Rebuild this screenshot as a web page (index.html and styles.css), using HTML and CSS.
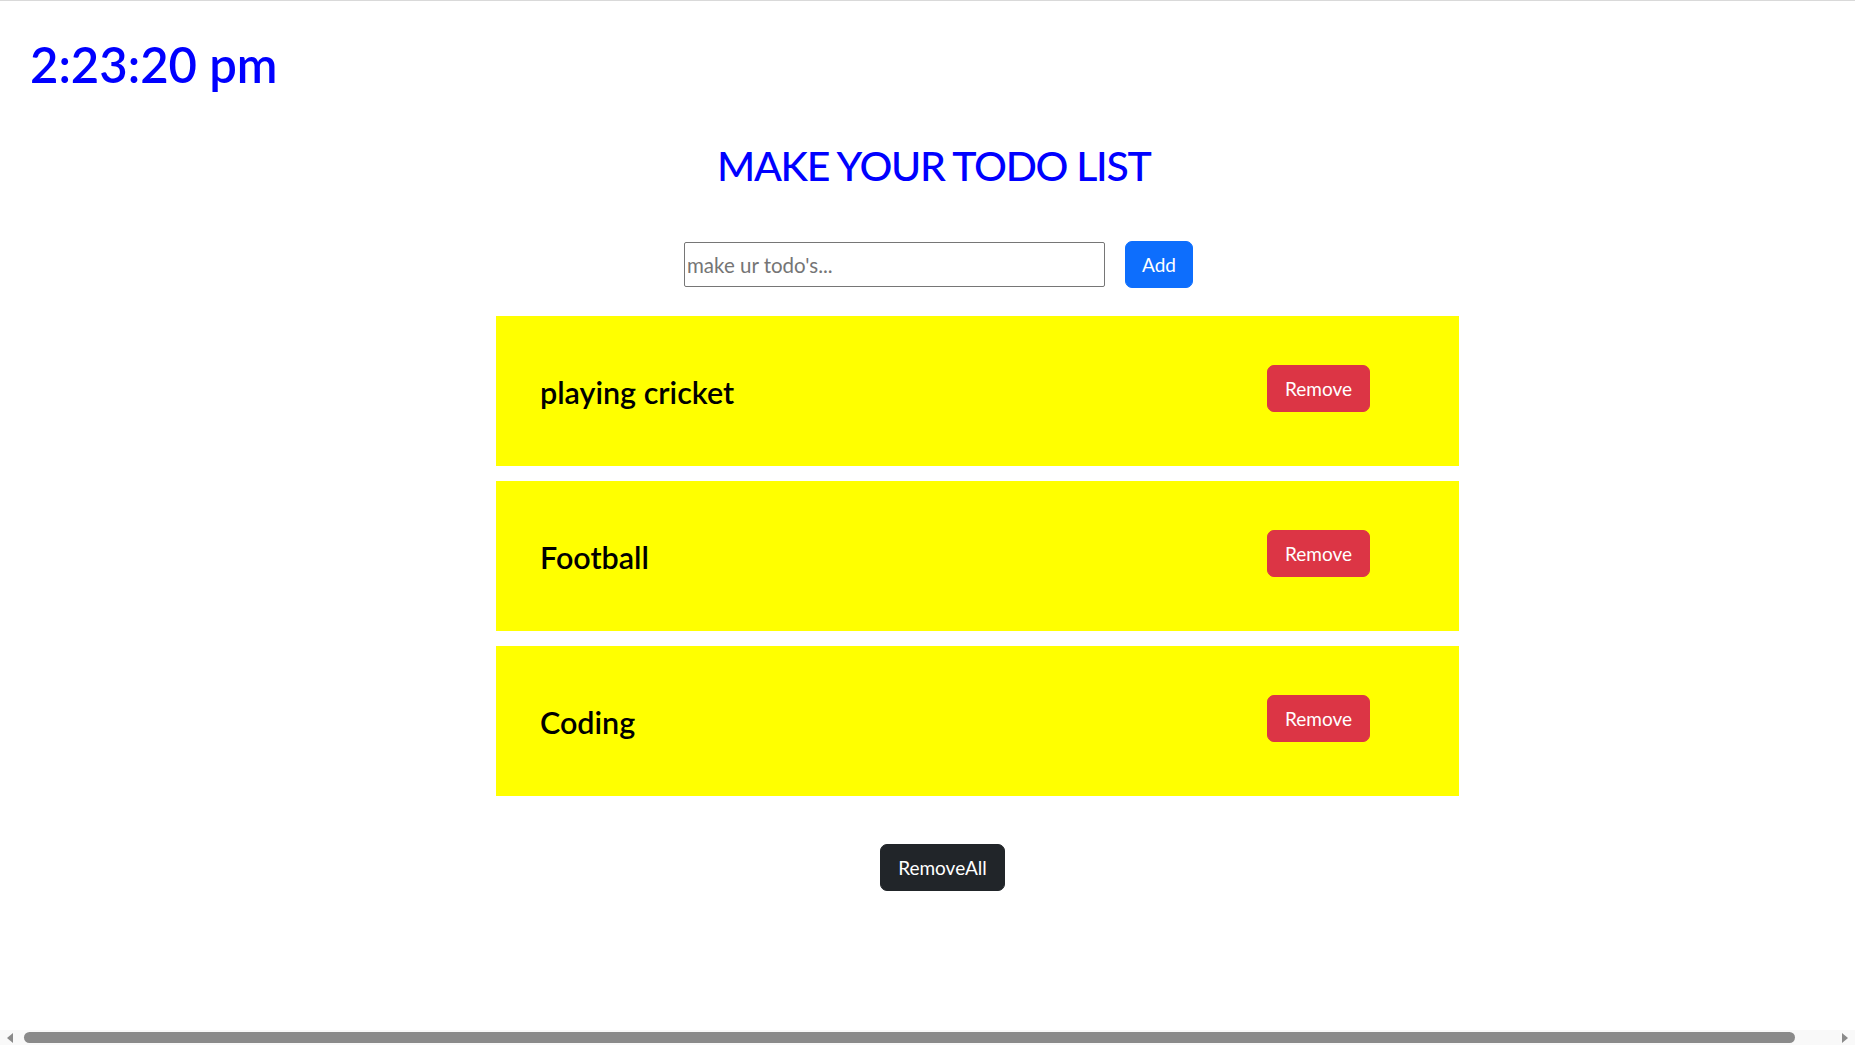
FILE: index.html
```html
<!DOCTYPE html>
<html lang="en">
<head>
<meta charset="utf-8">
<title>Todo List</title>
<link rel="stylesheet" href="styles.css">
</head>
<body>
<div class="page">
  <h1 class="clock">2:23:20 pm</h1>
  <h2 class="title">MAKE YOUR TODO LIST</h2>
  <div class="add-row">
    <input class="todo-input" type="text" placeholder="make ur todo's...">
    <button class="btn btn-add">Add</button>
  </div>
  <ul class="todo-list">
    <li class="todo-card">
      <h3 class="todo-text">playing cricket</h3>
      <button class="btn btn-remove">Remove</button>
    </li>
    <li class="todo-card">
      <h3 class="todo-text">Football</h3>
      <button class="btn btn-remove">Remove</button>
    </li>
    <li class="todo-card">
      <h3 class="todo-text">Coding</h3>
      <button class="btn btn-remove">Remove</button>
    </li>
  </ul>
  <div class="footer-row">
    <button class="btn btn-dark">RemoveAll</button>
  </div>
</div>
<div class="hscroll" aria-hidden="true">
  <span class="hscroll-arrow hscroll-left"></span>
  <span class="hscroll-thumb"></span>
  <span class="hscroll-arrow hscroll-right"></span>
</div>
</body>
</html>
```
FILE: styles.css
```css
html, body {
  margin: 0;
  padding: 0;
  background: #ffffff;
  overflow: hidden;
}

.page {
  min-height: 1000px;
  border-top: 1px solid #d9d9d9;
  font-family: Lato, "Open Sans", sans-serif;
  color: #000;
}

.clock {
  margin: 0;
  padding: 33px 0 0 30px;
  font-size: 49px;
  line-height: 60px;
  font-weight: 600;
  color: #0000ff;
}

.title {
  margin: 47px 0 0 0;
  padding-left: 717px;
  font-size: 41px;
  line-height: 50px;
  font-weight: 500;
  letter-spacing: -1.3px;
  color: #0000ff;
}

.add-row {
  display: flex;
  align-items: center;
  gap: 20px;
  margin-top: 50px;
  padding-left: 684px;
}

.todo-input {
  box-sizing: border-box;
  width: 421px;
  height: 45px;
  margin: 0;
  padding: 1px 2px;
  border: 1px solid #767676;
  border-radius: 2px;
  font-family: Lato, "Open Sans", sans-serif;
  font-size: 20.5px;
  color: #000;
}

.todo-input::placeholder {
  color: #757575;
}

.btn {
  box-sizing: border-box;
  height: 47px;
  margin: 0;
  padding: 0;
  border: 1px solid transparent;
  border-radius: 7px;
  font-family: Lato, "Open Sans", sans-serif;
  font-size: 19px;
  line-height: 29px;
  color: #ffffff;
  cursor: pointer;
}

.btn-add {
  background: #0d6efd;
  border-color: #0d6efd;
  width: 68px;
}

.btn-remove {
  background: #dc3545;
  border-color: #dc3545;
  width: 103px;
  margin-top: 49px;
}

.btn-dark {
  background: #212529;
  border-color: #212529;
  width: 125px;
}

.todo-list {
  list-style: none;
  margin: 28px 0 0 496px;
  padding: 0;
  width: 963px;
  display: flex;
  flex-direction: column;
  gap: 15px;
}

.todo-card {
  display: flex;
  justify-content: space-between;
  align-items: flex-start;
  height: 150px;
  box-sizing: border-box;
  padding: 0 89px 0 44px;
  background: #ffff00;
}

.todo-text {
  margin: 58px 0 0 0;
  font-size: 30.5px;
  line-height: 36px;
  font-weight: 600;
}

.footer-row {
  margin-top: 48px;
  padding-left: 880px;
}

/* window horizontal scrollbar overlay */
.hscroll {
  position: fixed;
  left: 0;
  right: 0;
  bottom: 0;
  height: 15px;
  display: flex;
  align-items: center;
  gap: 11px;
  padding: 0 7px;
  box-sizing: border-box;
  background: #f9f9f9;
}

.hscroll-arrow {
  width: 0;
  height: 0;
  border-top: 5px solid transparent;
  border-bottom: 5px solid transparent;
}

.hscroll-left {
  border-right: 6px solid #8a8a8a;
}

.hscroll-right {
  border-left: 6px solid #8a8a8a;
}

.hscroll-thumb {
  flex: 1;
  height: 11px;
  margin: 0 36px 0 0;
  border-radius: 6px;
  background: #8a8a8a;
}
```
